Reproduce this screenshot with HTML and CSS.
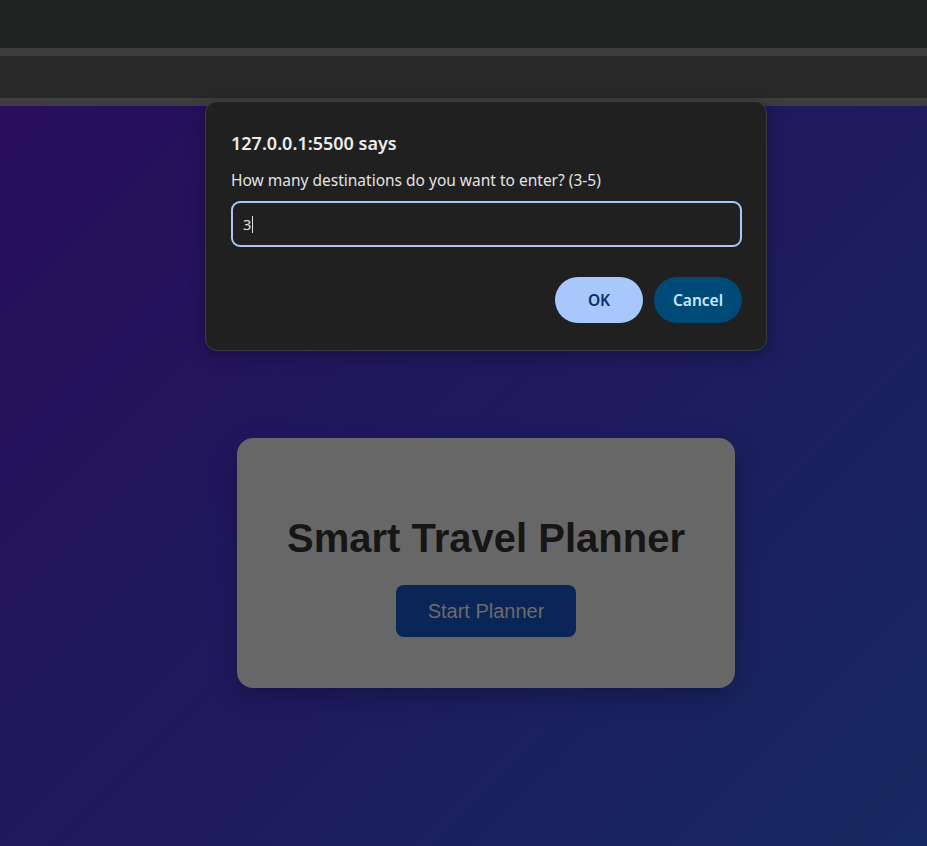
FILE: index.html
```html
<!DOCTYPE html>
<html>
<head>
<meta charset="utf-8">
<link rel="stylesheet" href="styles.css">
</head>
<body>
<div class="chrome">
  <div class="bar-top"></div>
  <div class="bar-line"></div>
  <div class="bar-mid"></div>
  <div class="bar-line"></div>
</div>
<main class="page">
  <section class="card">
    <h1 class="card-title">Smart Travel Planner</h1>
    <button class="start-btn">Start Planner</button>
  </section>
</main>
<div class="dialog">
  <div class="dialog-title">127.0.0.1:5500 says</div>
  <div class="dialog-msg">How many destinations do you want to enter? (3-5)</div>
  <div class="dialog-input"><span class="val">3</span><span class="caret"></span></div>
  <div class="dialog-actions">
    <button class="btn btn-ok">OK</button>
    <button class="btn btn-cancel">Cancel</button>
  </div>
</div>
</body>
</html>
```
FILE: styles.css
```css
html, body {
  margin: 0;
  padding: 0;
  height: 100%;
  overflow: hidden;
  background: #202221;
}
.chrome {
  display: flex;
  flex-direction: column;
}
.bar-top { height: 48px; background: #202221; }
.bar-line { height: 8px; background: #3d3d3d; }
.bar-mid { height: 42px; background: #282828; }
.page {
  height: 740px;
  background: linear-gradient(135deg, #280d5c 0%, #1e1a5e 50%, #16295f 100%);
  display: flex;
  justify-content: flex-start;
  align-items: flex-start;
  padding: 332px 0 0 237px;
  box-sizing: border-box;
}
.card {
  width: 498px;
  height: 250px;
  box-sizing: border-box;
  padding-top: 20px;
  background: #676767;
  border-radius: 16px;
  box-shadow: 0 8px 24px rgba(0,0,0,0.25);
  display: flex;
  flex-direction: column;
  align-items: center;
  justify-content: center;
  gap: 24px;
  font-family: "Liberation Sans", Arial, sans-serif;
}
.card-title {
  margin: 0;
  font-size: 40px;
  font-weight: bold;
  color: #161616;
  line-height: 46px;
  margin-top: 6px;
}
.start-btn {
  width: 180px;
  height: 52px;
  border: none;
  border-radius: 8px;
  background: #0a2656;
  color: #6b6b6b;
  font-family: "Liberation Sans", Arial, sans-serif;
  font-size: 20px;
}
.dialog {
  position: absolute;
  left: 205px;
  top: 101px;
  width: 562px;
  height: 250px;
  box-sizing: border-box;
  background: #202020;
  border: 1px solid #3c3c3c;
  border-radius: 12px;
  padding: 29px 24px 0 25px;
  font-family: "Noto Sans", "Open Sans", sans-serif;
  color: #e3e3e3;
  box-shadow: 0 4px 16px rgba(0,0,0,0.3);
}
.dialog-title {
  font-size: 18px;
  font-weight: 600;
  line-height: 24px;
  color: #ececec;
}
.dialog-msg {
  margin-top: 15px;
  font-size: 15.5px;
  line-height: 20px;
  color: #e3e3e3;
}
.dialog-input {
  margin-top: 11px;
  height: 46px;
  box-sizing: border-box;
  border: 2px solid #a8c7fa;
  border-radius: 9px;
  display: flex;
  align-items: center;
  padding-left: 10px;
  font-size: 14.5px;
  color: #e3e3e3;
}
.caret {
  display: inline-block;
  width: 1px;
  height: 17px;
  background: #e3e3e3;
  margin-left: 1px;
}
.dialog-actions {
  margin-top: 30px;
  display: flex;
  justify-content: flex-end;
  gap: 11px;
}
.btn {
  width: 88px;
  height: 46px;
  border: none;
  border-radius: 23px;
  font-family: "Noto Sans", "Open Sans", sans-serif;
  font-size: 15.5px;
  font-weight: 600;
}
.btn-ok { background: #a8c7fa; color: #0b2e66; }
.btn-cancel { background: #004a77; color: #c2e7ff; }
```
